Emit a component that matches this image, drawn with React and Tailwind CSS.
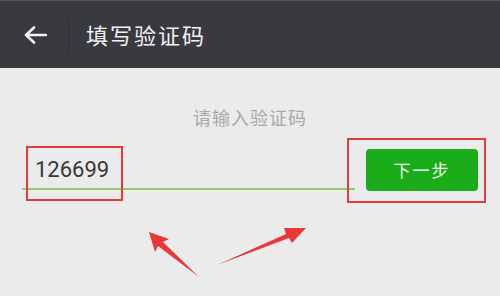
import React from "react";

// -------------------------------------------
// Header
// -------------------------------------------
const Header = () => (
  <div className="flex h-[68px] items-center border-t border-[#55565b] bg-[#393a3f]">
    <div className="flex w-[68px] items-center pl-[24px]">
      <svg width="23" height="18" viewBox="0 0 23 18" fill="none">
        <path
          d="M10 1.5 L2 9 L10 16.5 M2 9 H22"
          stroke="#f2f2f2"
          strokeWidth="2.6"
          strokeLinecap="round"
          strokeLinejoin="round"
        />
      </svg>
    </div>
    <div className="h-[32px] w-px bg-[#2c2d31]" />
    <h1 className="ml-[17px] text-[22px] tracking-[2px] text-[#f2f2f2]">填写验证码</h1>
  </div>
);

// -------------------------------------------
// Annotation arrows (overlay)
// -------------------------------------------
const Arrows = () => (
  <svg className="pointer-events-none absolute inset-0" width="500" height="296">
    <polygon
      points="149,232 169,239 163,242 199,277 158,246 155,252"
      fill="#e8383a"
    />
    <polygon
      points="306,228 284,228 286,234 217,265 289,238 292,243"
      fill="#e8383a"
    />
  </svg>
);

export default function App() {
  return (
    <div
      className="relative h-[296px] w-[500px] overflow-hidden bg-[#ebebeb]"
      style={{ fontFamily: '"Noto Sans CJK SC", Roboto, sans-serif' }}
    >
      <Header />

      <p className="mt-[37px] text-center text-[18px] leading-[24px] tracking-[1px] text-[#a9a9a9]">
        请输入验证码
      </p>

      <div className="mt-[19px] flex items-end gap-[11px] px-[22px]">
        <div className="flex h-[42px] flex-1 flex-col justify-end">
          <div className="flex flex-1 items-center pl-[13px] pt-[2px]">
            <span className="font-['Roboto'] text-[22px] text-[#383838]">126699</span>
          </div>
          <div className="h-[2px] bg-[#91cd6b]" />
        </div>
        <button className="mb-[-1px] h-[42px] w-[112px] rounded-[4px] bg-[#1aad19] text-[17px] tracking-[2px] text-[#eef8ee]">
          下一步
        </button>
      </div>

      {/* Red annotation boxes */}
      <div className="absolute left-[26px] top-[146px] h-[55px] w-[97px] border-2 border-[#e53a3a]" />
      <div className="absolute left-[347px] top-[138px] h-[65px] w-[139px] border-2 border-[#e53a3a]" />

      <Arrows />
    </div>
  );
}
